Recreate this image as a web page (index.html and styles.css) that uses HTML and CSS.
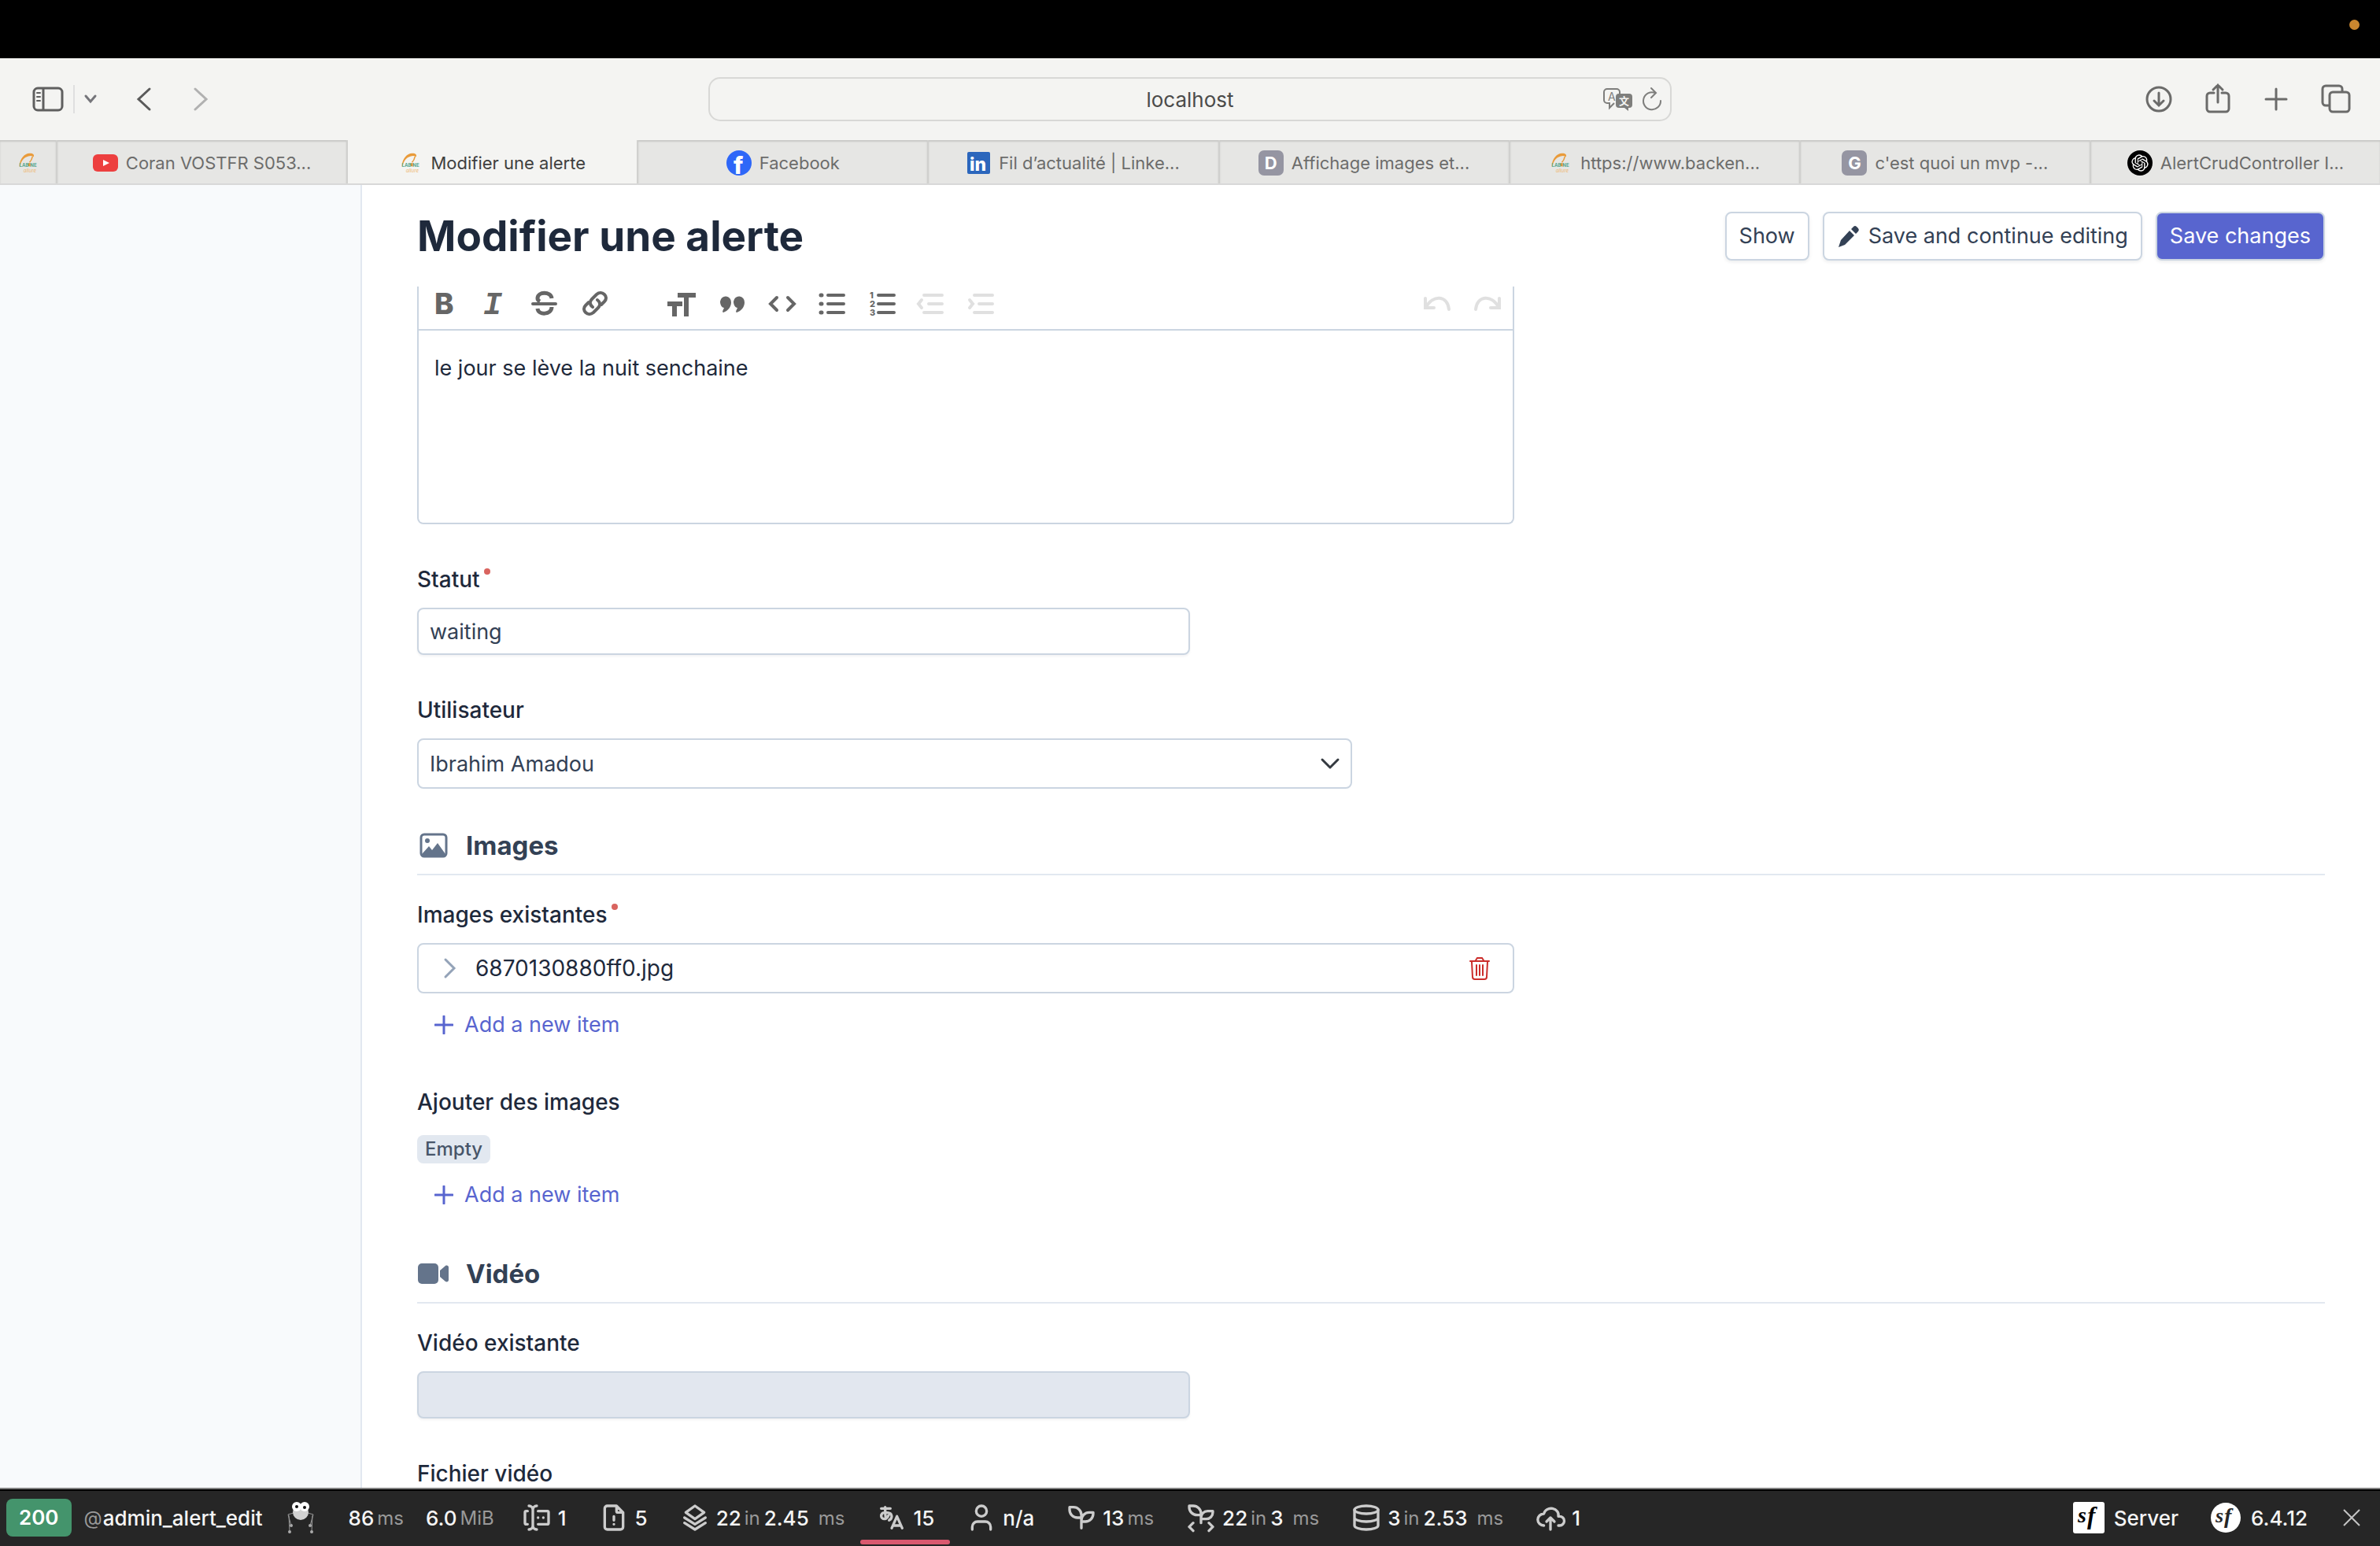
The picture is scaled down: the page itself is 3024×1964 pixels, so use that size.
FILE: index.html
```html
<!DOCTYPE html>
<html lang="fr">
<head>
  <meta charset="UTF-8" />
  <meta name="viewport" content="width=device-width, initial-scale=1.0"/>
  <title>Modifier une alerte</title>
  <link rel="stylesheet" href="styles.css">
</head>
<body>
  <svg class="defs" aria-hidden="true">
    <symbol id="logo" viewBox="0 0 30 34">
      <path d="M0 22C1 9 10 0 18 1c5 0 7 2 6 6-3-2-6-2-9-1C8 8 3 13 1 24z" fill="#e99b3b"/>
      <path d="M22 6c-1 5-3 8-5 10" fill="none" stroke="#e99b3b" stroke-width="2"/>
      <circle cx="17" cy="20" r="3" fill="#e99b3b"/>
      <g font-size="8" font-weight="700" fill="#58a891"><text x="0" y="24">LAB</text><text x="18" y="24">NE</text></g>
      <text x="7" y="33" font-size="8" font-style="italic" fill="#efb76f">allure</text>
    </symbol>
    <symbol id="plus" viewBox="0 0 24 24">
      <path d="M12 1v22M1 12h22" stroke="currentColor" stroke-width="3" stroke-linecap="round"/>
    </symbol>
  </svg>

  <div class="menubar"><span class="rec-dot"></span></div>

  <header class="browser">
    <div class="browser-left">
      <button class="tool" aria-label="Barre latérale">
        <svg width="40" height="32" viewBox="0 0 40 32" fill="none" stroke="#5f5f5f" stroke-width="3">
          <rect x="2" y="2" width="36" height="28" rx="5"/>
          <path d="M14 2v28"/>
          <path d="M6 8h4M6 13h4M6 18h4" stroke-width="2" stroke-linecap="round"/>
        </svg>
      </button>
      <span class="tool-divider"></span>
      <button class="tool tool-chevron" aria-label="Groupes d'onglets">
        <svg width="16" height="12" viewBox="0 0 16 12" fill="none" stroke="#75757a" stroke-width="3" stroke-linecap="round"><path d="M2 2l6 7 6-7"/></svg>
      </button>
      <button class="tool tool-back" aria-label="Précédent">
        <svg width="20" height="32" viewBox="0 0 20 32" fill="none" stroke="#5a5a5a" stroke-width="3" stroke-linecap="round"><path d="M17 3L3 16l14 13"/></svg>
      </button>
      <button class="tool tool-next" aria-label="Suivant">
        <svg width="20" height="32" viewBox="0 0 20 32" fill="none" stroke="#b1b1b1" stroke-width="3" stroke-linecap="round"><path d="M3 3l14 13L3 29"/></svg>
      </button>
    </div>

    <div class="address">
      <span class="address-text">localhost</span>
      <span class="address-icons">
        <svg width="40" height="30" viewBox="0 0 40 30">
          <path d="M15 20l-6 6v-6H6a4 4 0 0 1-4-4V6a4 4 0 0 1 4-4h12a4 4 0 0 1 4 4v2" fill="none" stroke="#7e7e7c" stroke-width="2"/>
          <text x="7" y="17" font-size="14" fill="#7e7e7c">A</text>
          <path d="M21 8h13a4 4 0 0 1 4 4v10a4 4 0 0 1-4 4h-1v4l-5-4h-7a4 4 0 0 1-4-4V12a4 4 0 0 1 4-4z" fill="#7e7e7c"/>
          <text x="21" y="22" font-size="13" font-weight="700" fill="#f4f4f2">文</text>
        </svg>
        <svg width="26" height="30" viewBox="0 0 26 30" fill="none" stroke="#7e7e7c" stroke-width="2" stroke-linecap="round"><path d="M17 7A11 11 0 1 0 24 17M12 1l6 6-6 6"/></svg>
      </span>
    </div>

    <div class="browser-right">
      <button class="tool" aria-label="Téléchargements">
        <svg width="38" height="40" viewBox="0 0 38 40" fill="none" stroke="#6b6b6a" stroke-width="3" stroke-linecap="round"><circle cx="19" cy="20" r="15"/><path d="M19 12v15M13 22l6 6 6-6"/></svg>
      </button>
      <button class="tool" aria-label="Partager">
        <svg width="38" height="40" viewBox="0 0 38 40" fill="none" stroke="#6b6b6a" stroke-width="3" stroke-linecap="round"><path d="M14 12H9a4 4 0 0 0-4 4v16a4 4 0 0 0 4 4h20a4 4 0 0 0 4-4V16a4 4 0 0 0-4-4h-5M19 24V2M13 8l6-6 6 6"/></svg>
      </button>
      <button class="tool" aria-label="Nouvel onglet">
        <svg width="38" height="40" viewBox="0 0 38 40" fill="none" stroke="#6b6b6a" stroke-width="3" stroke-linecap="round"><path d="M18 7v26M5 20h26"/></svg>
      </button>
      <button class="tool" aria-label="Vue d'ensemble">
        <svg width="38" height="40" viewBox="0 0 38 40" fill="none" stroke="#6b6b6a" stroke-width="3"><path d="M11 28H6a4 4 0 0 1-4-4V7a4 4 0 0 1 4-4h17a4 4 0 0 1 4 4v4"/><rect x="11" y="11" width="25" height="25" rx="4"/></svg>
      </button>
    </div>
  </header>

  <nav class="tabs">
    <a class="tab tab-pinned" href="#" aria-label="La bonne allure"><svg class="favicon-logo"><use href="#logo"/></svg></a>
    <a class="tab" href="#">
      <svg width="32" height="32" viewBox="0 0 32 32"><rect y="5" width="32" height="22" rx="6" fill="#ed3f3f"/><path d="M13 12v8l8-4z" fill="#fff"/></svg>
      <span>Coran VOSTFR S053...</span>
    </a>
    <a class="tab tab-active" href="#"><svg class="favicon-logo"><use href="#logo"/></svg><span>Modifier une alerte</span></a>
    <a class="tab" href="#">
      <svg width="32" height="32" viewBox="0 0 32 32"><circle cx="16" cy="16" r="16" fill="#2e67f8"/><text x="9" y="30" font-size="30" font-weight="800" fill="#fff">f</text></svg>
      <span>Facebook</span>
    </a>
    <a class="tab" href="#">
      <svg width="30" height="32" viewBox="0 0 30 32"><rect y="2" width="29" height="28" rx="2" fill="#2b66bc"/><text x="3" y="26" font-size="23" font-weight="800" fill="#fff">in</text></svg>
      <span>Fil d’actualité | Linke...</span>
    </a>
    <a class="tab" href="#"><span class="favicon-letter">D</span><span>Affichage images et...</span></a>
    <a class="tab" href="#"><svg class="favicon-logo"><use href="#logo"/></svg><span>https://www.backen...</span></a>
    <a class="tab" href="#"><span class="favicon-letter">G</span><span>c'est quoi un mvp -...</span></a>
    <a class="tab" href="#">
      <svg width="32" height="32" viewBox="-6 -6 36 36"><circle cx="12" cy="12" r="18" fill="#000"/><path fill="#fff" d="M22.2819 9.8211a5.9847 5.9847 0 0 0-.5157-4.9108 6.0462 6.0462 0 0 0-6.5098-2.9A6.0651 6.0651 0 0 0 4.9807 4.1818a5.9847 5.9847 0 0 0-3.9977 2.9 6.0462 6.0462 0 0 0 .7427 7.0966 5.98 5.98 0 0 0 .511 4.9107 6.051 6.051 0 0 0 6.5146 2.9001A5.9847 5.9847 0 0 0 13.2599 24a6.0557 6.0557 0 0 0 5.7718-4.2058 5.9894 5.9894 0 0 0 3.9977-2.9001 6.0557 6.0557 0 0 0-.7475-7.0729zm-9.022 12.6081a4.4755 4.4755 0 0 1-2.8764-1.0408l.1419-.0804 4.7783-2.7582a.7948.7948 0 0 0 .3927-.6813v-6.7369l2.02 1.1686a.071.071 0 0 1 .038.052v5.5826a4.504 4.504 0 0 1-4.4945 4.4944zm-9.6607-4.1254a4.4708 4.4708 0 0 1-.5346-3.0137l.142.0852 4.783 2.7582a.7712.7712 0 0 0 .7806 0l5.8428-3.3685v2.3324a.0804.0804 0 0 1-.0332.0615L9.74 19.9502a4.4992 4.4992 0 0 1-6.1408-1.6464zM2.3408 7.8956a4.485 4.485 0 0 1 2.3655-1.9728V11.6a.7664.7664 0 0 0 .3879.6765l5.8144 3.3543-2.0201 1.1685a.0757.0757 0 0 1-.071 0l-4.8303-2.7865A4.504 4.504 0 0 1 2.3408 7.872zm16.5963 3.8558L13.1038 8.364 15.1192 7.2a.0757.0757 0 0 1 .071 0l4.8303 2.7913a4.4944 4.4944 0 0 1-.6765 8.1042v-5.6772a.79.79 0 0 0-.407-.667zm2.0107-3.0231l-.142-.0852-4.7735-2.7818a.7759.7759 0 0 0-.7854 0L9.409 9.2297V6.8974a.0662.0662 0 0 1 .0284-.0615l4.8303-2.7866a4.4992 4.4992 0 0 1 6.6802 4.66zM8.3065 12.863l-2.02-1.1638a.0804.0804 0 0 1-.038-.0567V6.0742a4.4992 4.4992 0 0 1 7.3757-3.4537l-.142.0805L8.704 5.459a.7948.7948 0 0 0-.3927.6813zm1.0976-2.3654l2.602-1.4998 2.6069 1.4998v2.9994l-2.5974 1.4997-2.6067-1.4997Z"/></svg>
      <span>AlertCrudController I...</span>
    </a>
  </nav>

  <div class="page">
    <aside class="sidebar"></aside>

    <main class="content">
      <div class="content-header">
        <h1>Modifier une alerte</h1>
        <div class="header-actions">
          <button class="btn">Show</button>
          <button class="btn">
            <svg width="30" height="30" viewBox="0 0 30 30" fill="currentColor"><path d="M21 3a3 3 0 0 1 4 0l2 2a3 3 0 0 1 0 4l-3 3-6-6zM16 8l6 6-12 12-8 3 3-9z"/></svg>
            Save and continue editing
          </button>
          <button class="btn btn-primary">Save changes</button>
        </div>
      </div>

      <form class="form">
        <div class="editor">
          <div class="editor-toolbar">
            <div class="editor-group">
              <button type="button" aria-label="Gras"><svg viewBox="0 5 64 44"><text x="20" y="40" font-size="37" font-weight="800" fill="currentColor">B</text></svg></button>
              <button type="button" aria-label="Italique"><svg viewBox="0 5 64 44"><text x="18" y="40" font-family="Liberation Mono" font-size="40" font-weight="700" font-style="italic" fill="currentColor">I</text></svg></button>
              <button type="button" aria-label="Barré"><svg viewBox="0 5 64 44"><path d="M41 20c-1-9-18-9-18 0 0 2 1 3 3 4M23 33c1 9 18 8 18-2" fill="none" stroke="currentColor" stroke-width="5"/><path d="M17 27h29" stroke="currentColor" stroke-width="4" stroke-linecap="round"/></svg></button>
              <button type="button" aria-label="Lien"><svg viewBox="0 5 64 44" fill="none" stroke="currentColor" stroke-width="4" stroke-linecap="round"><path d="M29 31c-4-3-4-7-1-10l6-6c7-6 16 3 10 9l-4 4"/><path d="M35 22c4 3 4 7 1 10l-6 6c-7 6-16-3-10-9l4-4"/></svg></button>
            </div>
            <div class="editor-group">
              <button type="button" aria-label="Titre"><svg viewBox="0 5 64 44" stroke="currentColor" stroke-width="6"><path d="M27 16h23M38 14v29M14 27h19M23 26v17"/></svg></button>
              <button type="button" aria-label="Citation"><svg viewBox="0 5 64 44" fill="currentColor"><path d="M17 24a7 7 0 1 1 14 1c0 6-4 11-10 13-2-1 0-3 1-6-3 0-5-4-5-8zM34 24a7 7 0 1 1 14 1c0 6-4 11-10 13-2-1 0-3 1-6-3 0-5-4-5-8z"/></svg></button>
              <button type="button" aria-label="Code"><svg viewBox="0 5 64 44" fill="none" stroke="currentColor" stroke-width="4" stroke-linecap="round"><path d="M25 19l-8 8 8 8M39 19l8 8-8 8"/></svg></button>
              <button type="button" aria-label="Puces"><svg viewBox="0 5 64 44" stroke="currentColor" stroke-width="4" stroke-linecap="round"><path d="M26 16h20M26 27h20M26 38h20"/><path d="M17 16h1M17 27h1M17 38h1" stroke-width="5"/></svg></button>
              <button type="button" aria-label="Numéros"><svg viewBox="0 5 64 44" fill="currentColor"><path d="M26 16h20M26 27h20M26 38h20" stroke="currentColor" stroke-width="4" stroke-linecap="round"/><g font-size="11" font-weight="800"><text x="15" y="20">1</text><text x="15" y="31">2</text><text x="15" y="42">3</text></g></svg></button>
              <button type="button" disabled aria-label="Diminuer le niveau"><svg viewBox="0 5 64 44" fill="none" stroke="currentColor" stroke-width="4" stroke-linecap="round"><path d="M20 16h23M26 27h17M20 38h23M17 22l-4 5 4 5"/></svg></button>
              <button type="button" disabled aria-label="Augmenter le niveau"><svg viewBox="0 5 64 44" fill="none" stroke="currentColor" stroke-width="4" stroke-linecap="round"><path d="M20 16h23M26 27h17M20 38h23M14 22l4 5-4 5"/></svg></button>
            </div>
            <div class="editor-group editor-history">
              <button type="button" disabled aria-label="Annuler"><svg viewBox="0 5 64 44" fill="none" stroke="currentColor" stroke-width="4" stroke-linecap="round"><path d="M17 20v12h11M18 31c9-16 27-15 29 3"/></svg></button>
              <button type="button" disabled aria-label="Rétablir"><svg viewBox="0 5 64 44" fill="none" stroke="currentColor" stroke-width="4" stroke-linecap="round"><path d="M47 20v12H36M46 31c-9-16-27-15-29 3"/></svg></button>
            </div>
          </div>
          <textarea class="editor-body" aria-label="Description">le jour se lève la nuit senchaine</textarea>
        </div>

        <div class="field">
          <label class="required" for="statut">Statut</label>
          <input class="control control-text" id="statut" type="text" value="waiting">
        </div>

        <div class="field">
          <label for="utilisateur">Utilisateur</label>
          <div class="select-wrap">
            <select class="control" id="utilisateur"><option>Ibrahim Amadou</option></select>
            <svg width="24" height="16" viewBox="0 0 24 16" fill="none" stroke="#343a40" stroke-width="3" stroke-linecap="round" stroke-linejoin="round"><path d="M2 3l10 10L22 3"/></svg>
          </div>
        </div>

        <h2>
          <svg width="40" height="32" viewBox="0 0 40 32" fill="#64748b"><rect x="5" y="2" width="32" height="28" rx="4" fill="none" stroke="#64748b" stroke-width="3"/><circle cx="13" cy="10" r="3"/><path d="M6 27l9-10 4 5 7-9 10 14v2H6z"/></svg>
          Images
        </h2>

        <div class="field field-items">
          <span class="label required">Images existantes</span>
          <div class="item">
            <button type="button" class="item-toggle">
              <svg width="20" height="28" viewBox="0 0 20 28" fill="none" stroke="#94a3b8" stroke-width="3" stroke-linecap="round"><path d="M4 3l11 11L4 25"/></svg>
              6870130880ff0.jpg
            </button>
            <button type="button" class="item-delete" aria-label="Supprimer">
              <svg width="28" height="30" viewBox="0 0 28 30" fill="none" stroke="#cb2d2b" stroke-width="2" stroke-linecap="round"><path d="M2 6h24M9 5l2-3h6l2 3M4 7l1 19a3 3 0 0 0 3 3h12a3 3 0 0 0 3-3l1-19M10 11v13M14 11v13M18 11v13"/></svg>
            </button>
          </div>
          <button type="button" class="add-item"><svg width="24" height="24"><use href="#plus"/></svg>Add a new item</button>
        </div>

        <div class="field field-items">
          <span class="label">Ajouter des images</span>
          <span class="badge">Empty</span>
          <button type="button" class="add-item"><svg width="24" height="24"><use href="#plus"/></svg>Add a new item</button>
        </div>

        <h2>
          <svg width="40" height="32" viewBox="0 0 40 32" fill="#64748b"><rect x="1" y="3" width="26" height="26" rx="5"/><path d="M29 12l7-6c2-1 4 0 4 2v16c0 2-2 3-4 2l-7-6z"/></svg>
          Vidéo
        </h2>

        <div class="field">
          <label for="video">Vidéo existante</label>
          <input class="control control-text" id="video" type="text" disabled>
        </div>

        <div class="field">
          <label for="fichier">Fichier vidéo</label>
          <input class="control" id="fichier" type="file">
        </div>
      </form>
    </main>
  </div>

  <footer class="debug">
    <span class="debug-status">200</span>
    <a class="debug-block debug-route" href="#"><small>@</small><span>admin_alert_edit</span></a>
    <a class="debug-spider" href="#" aria-label="Crawler">
      <svg width="36" height="42" viewBox="0 0 36 42">
        <path d="M9 15L2 17l4 14M3 18l1 21M27 15l7 2-4 14M33 18l-1 21" fill="none" stroke="#9a9a9a" stroke-width="1"/>
        <circle cx="18" cy="14" r="10" fill="#d2d2d2"/>
        <circle cx="13" cy="7" r="6" fill="#fff"/><circle cx="23" cy="7" r="6" fill="#fff"/>
        <circle cx="13" cy="7" r="2" fill="#111"/><circle cx="23" cy="8" r="2" fill="#111"/>
        <g fill="#aaa"><circle cx="6" cy="31" r="2"/><circle cx="30" cy="31" r="2"/><circle cx="4" cy="39" r="2"/><circle cx="32" cy="39" r="2"/></g>
      </svg>
    </a>
    <a class="debug-block debug-plain" href="#">86<small>ms</small></a>
    <a class="debug-block debug-plain" href="#">6.0<small>MiB</small></a>
    <a class="debug-block" href="#"><svg class="ico" viewBox="0 0 24 24"><path d="M12 3a3 3 0 0 0-3 3v12a3 3 0 0 0 3 3M6 3a3 3 0 0 1 3 3v12a3 3 0 0 1-3 3M13 7h7a1 1 0 0 1 1 1v8a1 1 0 0 1-1 1h-7M5 7h-1a1 1 0 0 0-1 1v8a1 1 0 0 0 1 1h1M17 12h.01M13 12h.01"/></svg>1</a>
    <a class="debug-block" href="#"><svg class="ico" viewBox="0 0 24 24"><path d="M14 3v4a1 1 0 0 0 1 1h4M17 21h-10a2 2 0 0 1-2-2v-14a2 2 0 0 1 2-2h7l5 5v11a2 2 0 0 1-2 2zM12 17h.01M12 11v3"/></svg>5</a>
    <a class="debug-block" href="#"><svg class="ico" viewBox="0 0 24 24"><path d="M12 3l-7 5 7 5 7-5zM4 12l8 5 8-5M4 16l8 5 8-5"/></svg>22<small>in</small>2.45<small class="unit">ms</small></a>
    <a class="debug-block debug-alert" href="#"><svg class="ico" viewBox="0 0 24 24"><path d="M4 5h7M7 4c0 4.846 0 7 .5 8M10 8.500c0 2.286-2 4.500-3.500 4.500s-2.500-1.135-2.500-2c0-2 1-3 3-3s5 .57 5 2.857c0 1.524-.667 2.571-2 3.143M12 20l4-9 4 9M19.100 18h-6.200"/></svg>15</a>
    <a class="debug-block" href="#"><svg class="ico" viewBox="0 0 24 24"><circle cx="12" cy="7" r="4"/><path d="M5 21v-2a4 4 0 0 1 4-4h6a4 4 0 0 1 4 4v2"/></svg>n/a</a>
    <a class="debug-block" href="#"><svg class="ico" viewBox="0 0 24 24"><path d="M12 10a6 6 0 0 0-6-6h-3v2a6 6 0 0 0 6 6h3M12 14a6 6 0 0 1 6-6h3v1a6 6 0 0 1-6 6h-3M12 20v-10"/></svg>13<small>ms</small></a>
    <a class="debug-block" href="#"><svg class="ico" viewBox="0 0 24 24"><path d="M12 9a6 6 0 0 0-6-6h-3v1a6 6 0 0 0 6 6h3M12 12a5 5 0 0 1 5-5h4v1a5 5 0 0 1-5 5h-4M12 16v-7M6 16l-3 3 3 3M18 16l3 3-3 3"/></svg>22<small>in</small>3<small class="unit">ms</small></a>
    <a class="debug-block" href="#"><svg class="ico" viewBox="0 0 24 24"><ellipse cx="12" cy="6" rx="9" ry="3"/><path d="M3 6v6a9 3 0 0 0 18 0v-6M3 12v6a9 3 0 0 0 18 0v-6"/></svg>3<small>in</small>2.53<small class="unit">ms</small></a>
    <a class="debug-block" href="#"><svg class="ico" viewBox="0 0 24 24"><path d="M7 18a4.600 4.400 0 0 1 0-9a5 4.500 0 0 1 11 2h1a3.500 3.500 0 0 1 0 7h-1M9 15l3-3 3 3M12 12v9"/></svg>1</a>
    <div class="debug-right">
      <a class="debug-block" href="#"><svg class="sf" viewBox="0 0 40 40"><rect width="40" height="40" rx="3" fill="#fff"/><g font-family="Liberation Serif" font-weight="700" font-style="italic" fill="#000"><text x="6" y="26" font-size="28">s</text><text x="18" y="28" font-size="31">f</text></g></svg>Server</a>
      <a class="debug-block" href="#"><svg class="sf" viewBox="0 0 40 40"><circle cx="20" cy="20" r="19" fill="#fff"/><g font-family="Liberation Serif" font-weight="700" font-style="italic" fill="#262626"><text x="7" y="26" font-size="26">s</text><text x="18" y="27" font-size="28">f</text></g></svg>6.4.12</a>
      <button class="debug-close" aria-label="Fermer"><svg width="22" height="22" viewBox="0 0 22 22" stroke="#c4c4c4" stroke-width="2"><path d="M1 1l20 20M21 1L1 21"/></svg></button>
    </div>
  </footer>
</body>
</html>
```
FILE: styles.css
```css
:root {
  --text: #1e293b;
  --text-soft: #334155;
  --border: #cbd5e1;
  --line: #e2e8f0;
  --primary: #5865cf;
  --chrome: #f4f4f2;
  --font-family: Inter, "Noto Sans CJK SC", sans-serif;
}

* {
  box-sizing: border-box;
}

body {
  margin: 0;
  height: 100vh;
  display: flex;
  flex-direction: column;
  overflow: hidden;
  background: #fff;
  color: var(--text);
  font-family: var(--font-family);
  font-size: 27px;
}

button, input, select, textarea {
  font: inherit;
  color: inherit;
}

button {
  padding: 0;
  border: 0;
  background: none;
  cursor: pointer;
}

a {
  color: inherit;
  text-decoration: none;
}

svg {
  display: block;
  flex: none;
  overflow: visible;
}

.defs {
  display: none;
}

/* top of the screen */

.menubar {
  height: 74px;
  flex: none;
  display: flex;
  justify-content: flex-end;
  padding: 25px 26px;
  background: #000;
}

.rec-dot {
  width: 13px;
  height: 13px;
  border-radius: 50%;
  background: #c9862f;
}

.browser {
  height: 104px;
  flex: none;
  display: grid;
  grid-template-columns: 1fr 1224px 1fr;
  align-items: center;
  background: var(--chrome);
}

.browser-left {
  display: flex;
  align-items: center;
  padding-left: 41px;
}

.tool-divider {
  width: 2px;
  height: 36px;
  margin: 0 12px;
  background: #dfdfdf;
}

.tool-back {
  margin-left: 50px;
}

.tool-next {
  margin-left: 52px;
}

.address {
  height: 56px;
  display: grid;
  grid-template-columns: 1fr auto 1fr;
  align-items: center;
  padding: 0 10px;
  border: 2px solid #d8d8d6;
  border-radius: 15px;
  font-size: 26px;
  color: #4b4b4a;
}

.address-text {
  grid-column: 2;
}

.address-icons {
  display: flex;
  justify-content: flex-end;
  gap: 10px;
}

.browser-right {
  display: flex;
  justify-content: flex-end;
  gap: 37px;
  padding-right: 37px;
}

.tabs {
  height: 57px;
  flex: none;
  display: flex;
  background: #e6e6e4;
  border-bottom: 2px solid #d8d8d8;
}

.tab {
  flex: 1;
  display: flex;
  align-items: center;
  justify-content: center;
  gap: 10px;
  padding-top: 2px;
  border-left: 2px solid #d0d0ce;
  box-shadow: inset 0 2px 2px #c8c8c6;
  font-size: 22px;
  color: #6c6c6b;
  white-space: nowrap;
}

.tab-pinned {
  flex: 0 0 71px;
  border-left: 0;
}

.tab-active {
  background: var(--chrome);
  box-shadow: none;
  color: #3f3f3f;
}

.favicon-logo {
  width: 30px;
  height: 26px;
}

.favicon-letter {
  width: 32px;
  height: 32px;
  border-radius: 7px;
  background: #9595a2;
  color: #fff;
  font-weight: 700;
  line-height: 32px;
  text-align: center;
}

/* admin page */

.page {
  flex: 1;
  min-height: 0;
  display: flex;
  overflow: hidden;
}

.sidebar {
  width: 460px;
  flex: none;
  background: #f8fafc;
  border-right: 2px solid var(--line);
}

.content {
  flex: 1;
  padding: 0 70px;
}

.content-header {
  height: 129px;
  display: flex;
  align-items: center;
  justify-content: space-between;
}

h1 {
  margin: 0;
  font-size: 53px;
  font-weight: 700;
}

.header-actions {
  display: flex;
  gap: 17px;
}

.btn {
  height: 62px;
  display: flex;
  align-items: center;
  gap: 10px;
  padding: 0 16px;
  border: 2px solid var(--border);
  border-radius: 8px;
  background: #fff;
  box-shadow: 0 2px 4px rgba(15, 23, 42, 0.08);
  color: var(--text-soft);
}

.btn-primary {
  background: var(--primary);
  color: #fff;
}

.editor {
  max-width: 1394px;
  border: 2px solid var(--border);
  border-top: 0;
  border-radius: 0 0 8px 8px;
}

.editor-toolbar {
  display: flex;
  gap: 46px;
  border-bottom: 2px solid var(--border);
}

.editor-group {
  display: flex;
}

.editor-history {
  margin-left: auto;
}

.editor-group button {
  padding-bottom: 10px;
  color: #666;
}

.editor-group button:disabled {
  color: #e0e0e0;
}

.editor-group svg {
  width: 64px;
  height: 44px;
}

.editor-body {
  display: block;
  width: 100%;
  height: 244px;
  padding: 28px 20px;
  border: 0;
  border-radius: 8px;
  outline: 0;
  resize: none;
  line-height: 40px;
}

.field {
  margin-top: 50px;
}

.field-items {
  padding-bottom: 8px;
}

label, .label {
  display: block;
  margin-bottom: 16px;
  font-size: 28px;
  font-weight: 500;
  line-height: 40px;
}

.required::after {
  content: "";
  display: inline-block;
  width: 8px;
  height: 8px;
  margin-left: 5px;
  border-radius: 50%;
  background: #d9645f;
  vertical-align: 16px;
}

.control {
  display: block;
  width: 100%;
  height: 64px;
  padding: 0 14px;
  border: 2px solid var(--border);
  border-radius: 8px;
  background: #fff;
  color: var(--text-soft);
}

.control-text {
  max-width: 982px;
  height: 60px;
  box-shadow: 0 2px 3px rgba(15, 23, 42, 0.05);
}

.control:disabled {
  background: #e2e7ef;
}

.select-wrap {
  max-width: 1188px;
  display: grid;
  align-items: center;
}

.select-wrap > * {
  grid-area: 1 / 1;
}

.select-wrap select {
  appearance: none;
}

.select-wrap svg {
  justify-self: end;
  margin-right: 16px;
  pointer-events: none;
}

h2 {
  display: flex;
  align-items: center;
  gap: 22px;
  margin: 48px 0 -20px;
  padding-bottom: 12px;
  border-bottom: 2px solid var(--line);
  font-size: 33px;
  font-weight: 700;
  line-height: 48px;
  color: var(--text-soft);
}

.item {
  max-width: 1394px;
  height: 64px;
  display: flex;
  align-items: center;
  justify-content: space-between;
  padding: 0 28px 0 30px;
  border: 2px solid var(--border);
  border-radius: 8px;
}

.item-toggle {
  display: flex;
  align-items: center;
  gap: 22px;
  font-size: 28px;
}

.add-item {
  display: flex;
  align-items: center;
  gap: 14px;
  margin-top: 20px;
  padding: 0 22px;
  line-height: 40px;
  color: var(--primary);
}

.badge {
  display: table;
  margin-top: 22px;
  padding: 0 10px;
  border-radius: 8px;
  background: var(--line);
  color: #475569;
  font-size: 24px;
  font-weight: 500;
  line-height: 36px;
}

/* debug toolbar */

.debug {
  height: 74px;
  flex: none;
  display: flex;
  align-items: center;
  border-top: 2px solid #808080;
  background: #262626;
  box-shadow: inset 0 2px #000;
  color: #f5f5f5;
  font-size: 26px;
  font-weight: 500;
  white-space: nowrap;
}

.debug small {
  margin: 0 5px 0 4px;
  font-size: 24px;
  font-weight: 400;
  color: #999;
}

.debug small:last-child {
  margin-right: 0;
}

.debug .unit {
  margin-left: 12px;
}

.debug-status {
  margin-left: 8px;
  padding: 0 16px;
  border-radius: 8px;
  background: #44946c;
  color: #fff;
  font-weight: 600;
  line-height: 48px;
}

.debug-block {
  height: 100%;
  display: flex;
  align-items: center;
  padding: 0 20px;
}

.debug-route {
  padding: 0 16px 0 12px;
}

.debug-route small {
  margin-right: 1px;
}

.debug-spider {
  padding: 0 29px 0 14px;
}

.debug-plain {
  padding: 0 14px;
}

.debug-alert {
  position: relative;
}

.debug-alert::after {
  content: "";
  position: absolute;
  right: 0;
  bottom: 2px;
  left: 0;
  height: 6px;
  border-radius: 3px;
  background: #d9596f;
}

.ico {
  width: 40px;
  height: 40px;
  margin-right: 7px;
  fill: none;
  stroke: #ccc;
  stroke-width: 2;
  stroke-linecap: round;
  stroke-linejoin: round;
}

.debug-right {
  height: 100%;
  display: flex;
  align-items: center;
  margin-left: auto;
}

.sf {
  width: 40px;
  height: 40px;
  margin-right: 12px;
}

.debug-close {
  padding: 0 25px;
}
```
